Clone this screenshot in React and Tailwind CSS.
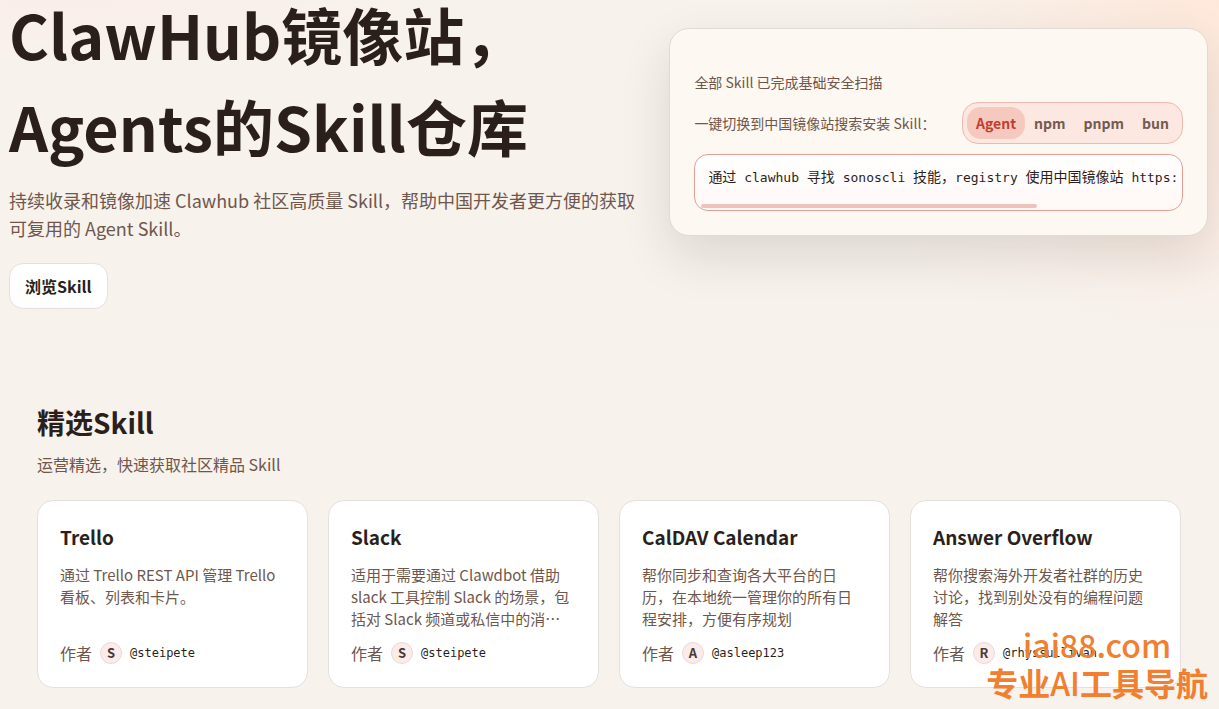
import { useState } from 'react';
import clsx from 'clsx';

const TABS = ['Agent', 'npm', 'pnpm', 'bun'];

const COMMAND = ['通过', ' clawhub ', '寻找', ' sonoscli ', '技能，', 'registry ', '使用中国镜像站', ' https:'];

const skills = [
  { name: 'Trello', author: 'steipete', description: '通过 Trello REST API 管理 Trello 看板、列表和卡片。' },
  { name: 'Slack', author: 'steipete', description: '适用于需要通过 Clawdbot 借助 slack 工具控制 Slack 的场景，包括对 Slack 频道或私信中的消⋯' },
  { name: 'CalDAV Calendar', author: 'asleep123', description: '帮你同步和查询各大平台的日历，在本地统一管理你的所有日程安排，方便有序规划' },
  { name: 'Answer Overflow', author: 'rhyssullivan', description: '帮你搜索海外开发者社群的历史讨论，找到别处没有的编程问题解答' },
];

function InstallCard() {
  const [tab, setTab] = useState('Agent');

  return (
    <div className="mt-10 rounded-[20px] border border-[#e0dad5] bg-[#fdf8f2] px-6 pt-[43px] pb-6 shadow-[0_20px_50px_rgba(43,31,27,0.13)]">
      <p className="text-sm leading-5">全部 Skill 已完成基础安全扫描</p>
      <div className="mt-[10px] flex items-center justify-between">
        <p className="text-sm">一键切换到中国镜像站搜索安装 Skill：</p>
        <div className="flex rounded-2xl border border-[#f0b9b0] bg-[#fce8e1] p-1">
          {TABS.map((name) => (
            <button
              key={name}
              type="button"
              onClick={() => setTab(name)}
              className={clsx(
                'h-8 rounded-[14px] px-[9px] text-sm font-bold',
                tab === name ? 'bg-[#f6c9bf] text-[#c33c30]' : 'text-[#745b4f]'
              )}
            >
              {name}
            </button>
          ))}
        </div>
      </div>
      <div className="mt-[10px] overflow-hidden rounded-[14px] border border-[#e59e94] bg-linear-to-b from-white to-[#fff8f6]">
        <code className="block h-8 whitespace-pre pt-3 pl-[13px] font-['DejaVu_Sans_Mono','Noto_Sans_CJK_SC',monospace] text-[13px] leading-5 text-[#2b1f1b]">
          {COMMAND.map((part) => (
            <span key={part} className={/[a-z]/.test(part) ? undefined : 'text-sm leading-5'}>{part}</span>
          ))}
        </code>
        {/* scroll thumb */}
        <div className="mt-[17px] mb-[2px] ml-[6px] h-1 w-[69%] rounded-full bg-[#ecc4bd]" />
      </div>
    </div>
  );
}

function SkillCard({ skill }) {
  return (
    <article className="flex h-[188px] flex-col rounded-2xl border border-[#e3e0de] bg-white pt-[21px] pr-6 pb-[22px] pl-[22px]">
      <h3 className="text-[19px] leading-[30px] font-bold text-[#2b1f1b]">{skill.name}</h3>
      <p className="mt-3 line-clamp-3 text-[15px] leading-[22px]">{skill.description}</p>
      <div className="mt-auto flex items-center text-base leading-6">
        <span>作者</span>
        <span className="mr-2 ml-2 flex size-[22px] items-center justify-center rounded-full border border-[#ecd8d5] bg-[#fbeceb] text-[13px] font-bold text-[#4a3a34]">
          {skill.author[0].toUpperCase()}
        </span>
        <a href="#author" className="font-['DejaVu_Sans_Mono',monospace] text-xs text-[#2b1f1b]">@{skill.author}</a>
      </div>
    </article>
  );
}

export default function App() {
  return (
    <div className="relative min-h-screen overflow-hidden bg-[#f7f2ec] bg-[radial-gradient(ellipse_420px_75px_at_5%_0,#fbeeea,transparent),radial-gradient(ellipse_330px_300px_at_100%_0,#fee8da,transparent),radial-gradient(ellipse_340px_190px_at_100%_24%,#fbeee8,transparent)] font-['Noto_Sans_CJK_SC',sans-serif] text-[#6f574c]">
      <main className="-mt-3 px-[9px] pb-5">
        <section className="grid grid-cols-[7fr_6fr] items-start gap-8 pr-[2px]">
          <div>
            <h1 className="text-[61px] leading-[92px] font-bold text-[#2b1f1b]">
              ClawHub镜像站，
              <br />
              Agents的Skill仓库
            </h1>
            <p className="mt-[14px] text-lg leading-7">
              持续收录和镜像加速 Clawhub 社区高质量 Skill，帮助中国开发者更方便的获取可复用的 Agent Skill。
            </p>
            <button type="button" className="mt-[21px] h-[46px] rounded-[14px] border border-[#e3e0de] bg-white px-[15px] text-base font-bold text-[#2b1f1b]">
              浏览Skill
            </button>
          </div>
          <InstallCard />
        </section>

        <section className="mt-[92px] pr-[29px] pl-7">
          <h2 className="text-[28px] leading-[42px] font-bold text-[#2b1f1b]">精选Skill</h2>
          <p className="mt-[9px] text-base leading-6">运营精选，快速获取社区精品 Skill</p>
          <div className="mt-6 grid grid-cols-4 gap-5">
            {skills.map((skill) => (
              <SkillCard key={skill.name} skill={skill} />
            ))}
          </div>
        </section>
      </main>

      <div className="pointer-events-none absolute right-[11px] bottom-2 text-center font-medium text-[#f08030]">
        <p className="text-[32px] leading-[38px]">iai88.com</p>
        <p className="text-[32px] leading-[38px] font-bold">
          专业<span className="font-medium">AI</span>工具导航
        </p>
      </div>
    </div>
  );
}
